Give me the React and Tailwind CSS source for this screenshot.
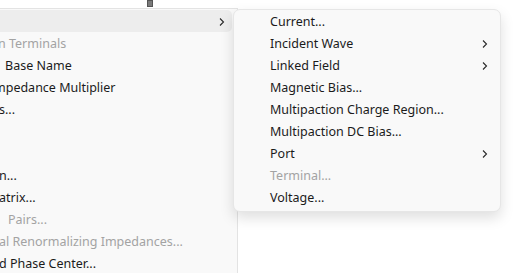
import React from "react";

const font = { fontFamily: '"Noto Sans", "Open Sans", sans-serif' };

const leftRows = [
  { text: "", chevron: true, active: true },
  { text: "n Terminals", ml: "ml-[-2px]", disabled: true },
  { text: "Base Name", ml: "ml-[5px]" },
  { text: "mpedance Multiplier", ml: "ml-[-6px]" },
  { text: "s...", ml: "ml-[-1px]" },
  { text: "" },
  { text: "" },
  { text: "n...", ml: "ml-[-1px]" },
  { text: "atrix...", ml: "ml-[-1px]" },
  { text: "Pairs...", ml: "ml-[8px]", disabled: true },
  { text: "al Renormalizing Impedances...", ml: "ml-[-1px]", disabled: true },
  { text: "d Phase Center...", ml: "ml-[-1px]" },
];

const subRows = [
  { text: "Current..." },
  { text: "Incident Wave", chevron: true },
  { text: "Linked Field", chevron: true },
  { text: "Magnetic Bias..." },
  { text: "Multipaction Charge Region..." },
  { text: "Multipaction DC Bias..." },
  { text: "Port", chevron: true },
  { text: "Terminal...", disabled: true },
  { text: "Voltage..." },
];

function Chevron() {
  return (
    <svg width="6" height="10" viewBox="0 0 6 10" className="shrink-0">
      <path d="M1 1.5 L4.5 5 L1 8.5" fill="none" stroke="#2a2a2a" strokeWidth="1.1" />
    </svg>
  );
}

export default function App() {
  return (
    <div className="relative w-[519px] h-[273px] bg-white overflow-hidden text-[12.5px]" style={font}>
      <div className="h-[8px] relative">
        <div className="absolute left-[147px] top-0 w-[6px] h-[7px] bg-[#7a7a7a] border border-[#555]" />
      </div>
      <div className="w-[238px] h-[265px] bg-[#f9f9f9] border-t border-r border-[#e3e3e3] pt-[1px] flex flex-col">
        {leftRows.map((r, i) => (
          <div
            key={i}
            className={
              "h-[22px] shrink-0 flex items-center overflow-hidden whitespace-nowrap pt-[2px] " +
              (r.active ? "bg-[#ededed] rounded-r-[5px] w-[232px] mr-[5px]" : "w-full")
            }
          >
            <span className={(r.ml || "") + " flex-1 " + (r.disabled ? "text-[#a3a3a3]" : "text-[#1b1b1b]")}>
              {r.text}
            </span>
            {r.chevron && (
              <span className="mr-[7px] flex items-center">
                <Chevron />
              </span>
            )}
          </div>
        ))}
      </div>
      <div className="absolute left-[233px] top-[9px] w-[268px] bg-[#f9f9f9] border border-[#e6e6e6] rounded-[7px] shadow-[0_6px_14px_rgba(0,0,0,0.13)] flex flex-col">
        {subRows.map((r, i) => (
          <div key={i} className="h-[22px] flex items-center pl-[36px] pr-[12px] pt-[2px] whitespace-nowrap">
            <span className={"flex-1 " + (r.disabled ? "text-[#a3a3a3]" : "text-[#1b1b1b]")}>{r.text}</span>
            {r.chevron && <Chevron />}
          </div>
        ))}
        <div className="h-[3px]" />
      </div>
    </div>
  );
}
